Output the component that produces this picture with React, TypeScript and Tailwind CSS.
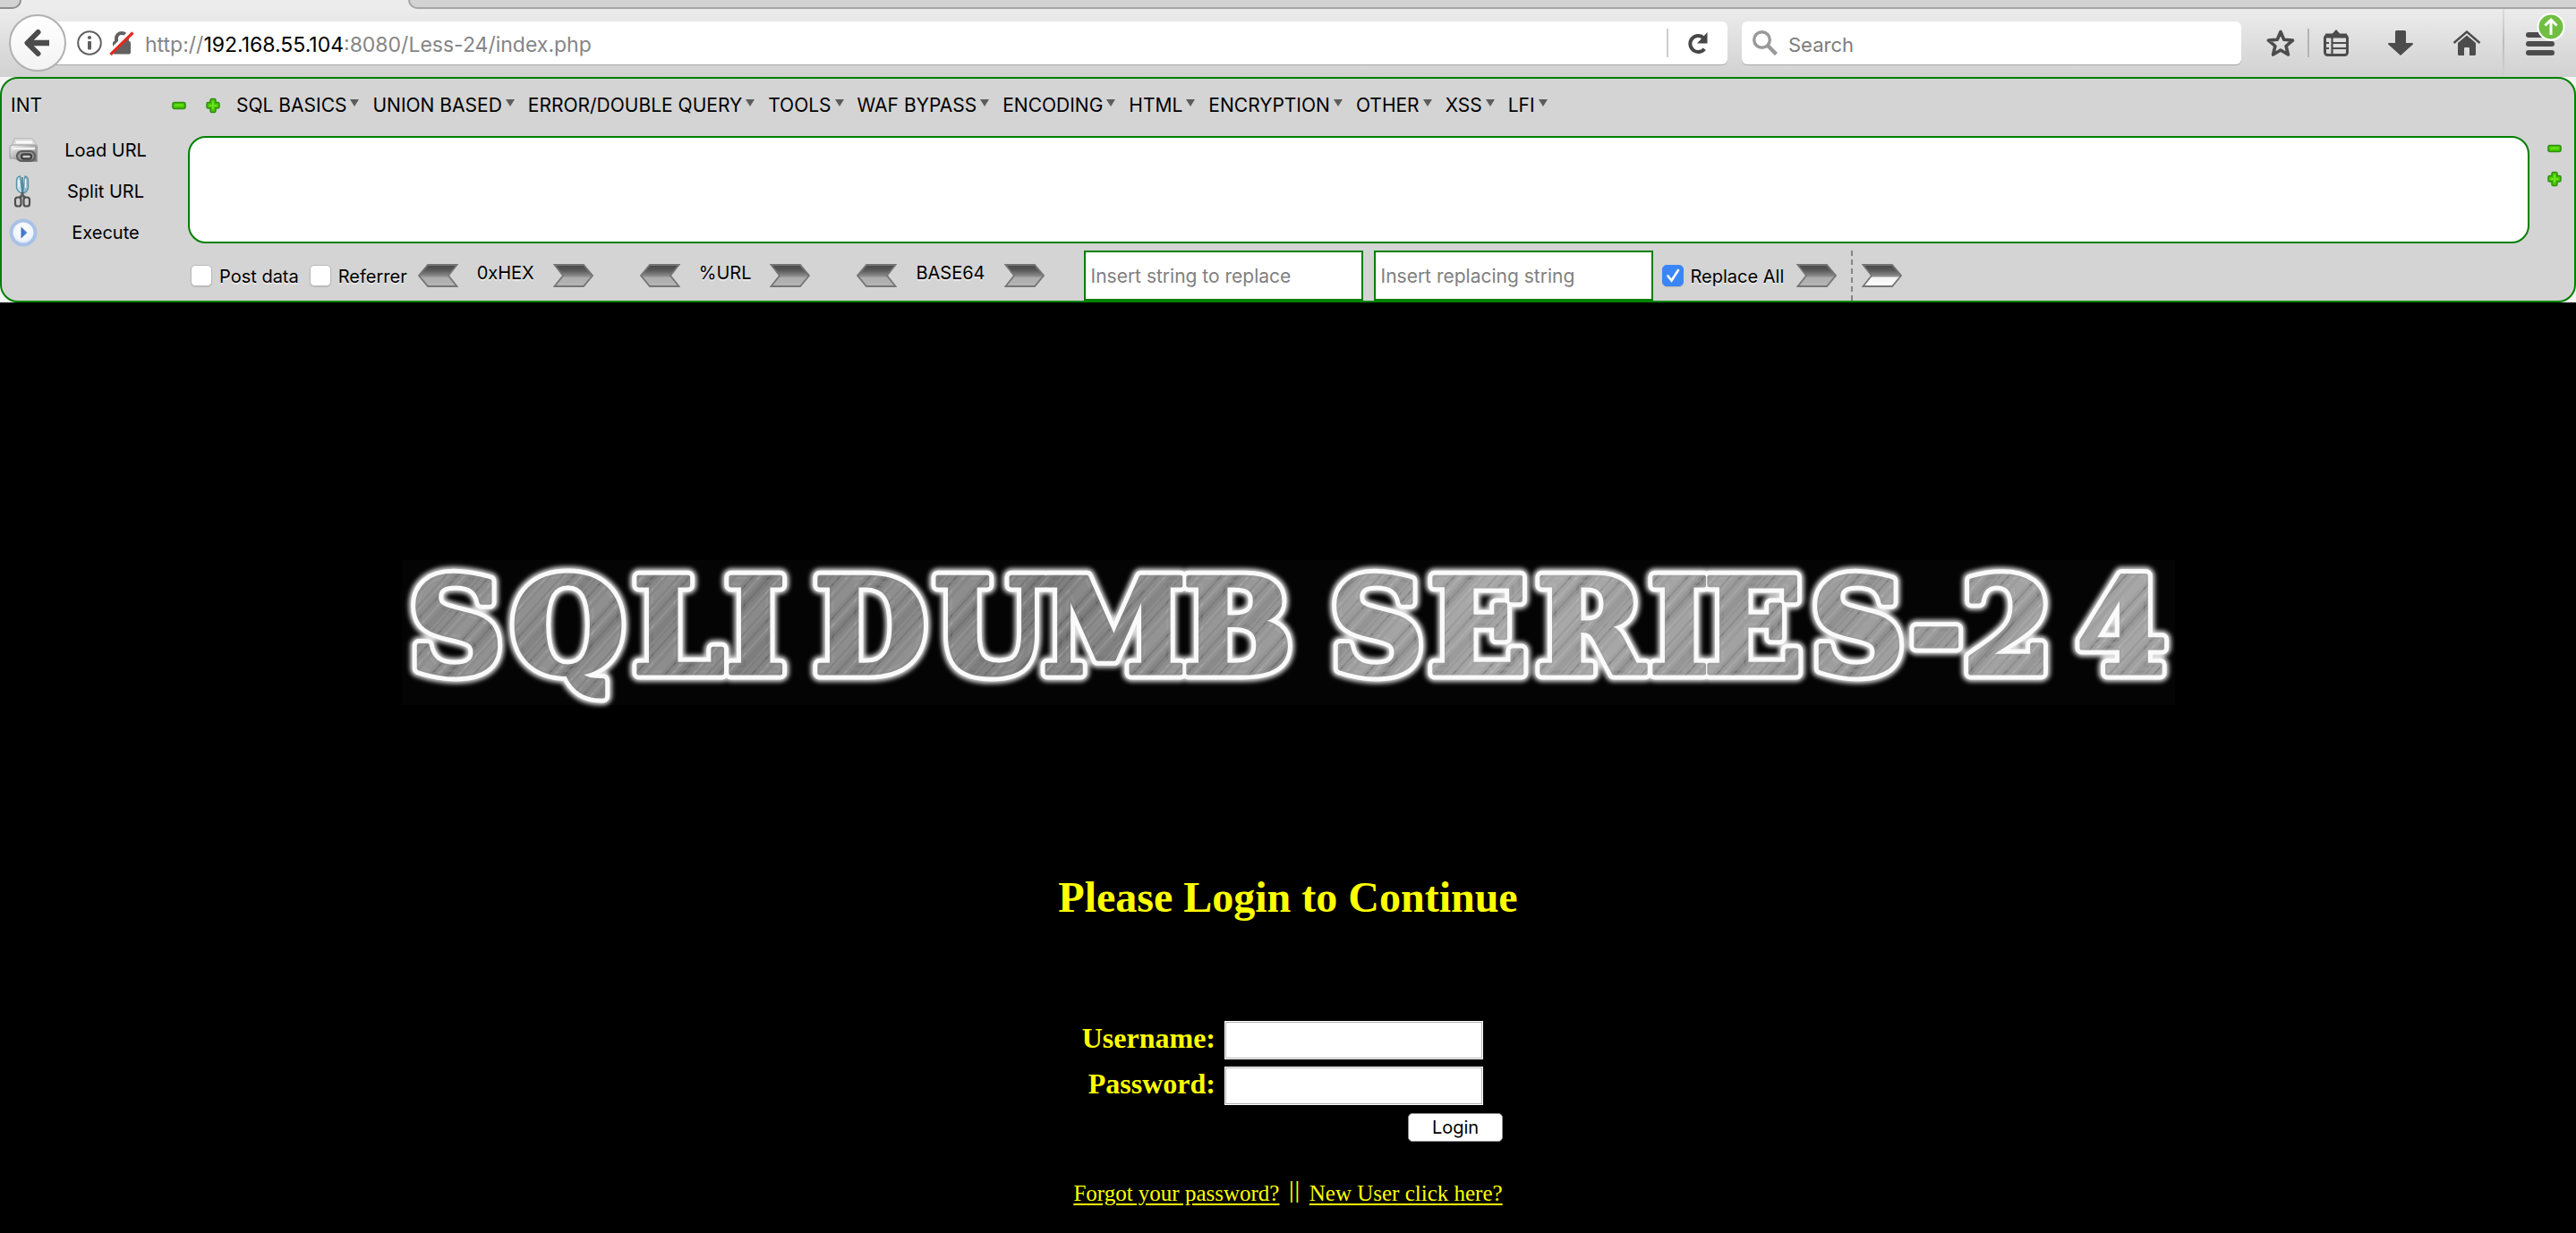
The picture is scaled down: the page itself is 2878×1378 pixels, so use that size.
import type { ReactNode } from "react";

const MENUS = [
  "SQL BASICS",
  "UNION BASED",
  "ERROR/DOUBLE QUERY",
  "TOOLS",
  "WAF BYPASS",
  "ENCODING",
  "HTML",
  "ENCRYPTION",
  "OTHER",
  "XSS",
  "LFI",
];

/* ---------- icons ---------- */

function GreenMinus() {
  return (
    <svg className="h-[18px] w-4" viewBox="0 0 16 18" aria-hidden="true">
      <rect x="1" y="5.5" width="14" height="7" rx="2" fill="#46c800" stroke="#2f8f10" strokeWidth="1.6" />
      <rect x="3" y="7.5" width="10" height="2" rx="1" fill="#6be31e" />
    </svg>
  );
}

function GreenPlus() {
  return (
    <svg className="h-[18px] w-4" viewBox="0 0 16 18" aria-hidden="true">
      <path
        d="M6.5 1.5h3a1.5 1.5 0 0 1 1.5 1.5v2.5h2.5A1.5 1.5 0 0 1 15 7v3.500a1.500 1.500 0 0 1-1.500 1.500H11V15a1.500 1.500 0 0 1-1.500 1.500h-3A1.500 1.500 0 0 1 5 15v-3H2.500A1.500 1.500 0 0 1 1 10.500V7a1.500 1.500 0 0 1 1.500-1.500H5V3A1.500 1.500 0 0 1 6.500 1.500z"
        fill="#46c800"
        stroke="#2f8f10"
        strokeWidth="1.5"
      />
      <path d="M3.500 9h9M8 4v9" stroke="#6be31e" strokeWidth="2" />
    </svg>
  );
}

function Chevron({ dir, light = false }: { dir: "left" | "right"; light?: boolean }) {
  const id = light ? "chev-light" : `chev-${dir}`;
  return (
    <svg className={dir === "left" ? "h-[26px] w-[45px] -scale-x-100" : "h-[26px] w-[45px]"} viewBox="0 0 45 26" aria-hidden="true">
      <defs>
        <linearGradient id={id} x1="0" x2="0" y1="0" y2="1">
          <stop offset="0" stopColor="#484848" />
          <stop offset="0.25" stopColor="#585858" />
          <stop offset="0.52" stopColor="#8c8c8c" />
          <stop offset="0.6" stopColor={light ? "#f4f4f4" : "#acacac"} />
          <stop offset="1" stopColor={light ? "#ffffff" : "#b6b6b6"} />
        </linearGradient>
      </defs>
      <path d="M1.500 1H34l10 12-10 12H1.500l9.500-12z" fill={`url(#${id})`} stroke="#757575" strokeWidth="1.800" />
    </svg>
  );
}

function LoadIcon() {
  return (
    <svg className="h-7 w-8" viewBox="0 0 32 28" aria-hidden="true">
      <defs>
        <linearGradient id="load-body" x1="0" x2="1" y1="0" y2="1">
          <stop offset="0" stopColor="#f4f4f4" />
          <stop offset="0.6" stopColor="#a2a2a2" />
          <stop offset="1" stopColor="#6e6e6e" />
        </linearGradient>
      </defs>
      <path d="M6 .800h20l5 7v3H3z" fill="#dedede" stroke="#b4b4b4" />
      <path d="M8 5h18" stroke="#fafafa" strokeWidth="3" />
      <path d="M1 9.500 4 8h26l1.500 2v16.500H14L6 23H1z" fill="url(#load-body)" stroke="#9a9a9a" />
      <path d="M4 12h25" stroke="#f2f2f2" strokeWidth="2.500" />
      <rect x="9" y="15" width="20" height="11" rx="5.500" fill="#9b9b9b" stroke="#5f5f5f" strokeWidth="2.200" />
      <rect x="14" y="18.500" width="11" height="5" rx="2.500" fill="#c9c9c9" stroke="#414141" strokeWidth="2.400" />
    </svg>
  );
}

function ScissorsIcon() {
  return (
    <svg className="h-9 w-8" viewBox="0 0 32 36" aria-hidden="true">
      <path d="M12.500 1c-2.500 0-4 2-4 6v6c0 3 2 5 4.500 6.500h2z" fill="#c4dde6" stroke="#5a93a9" strokeWidth="1.400" />
      <path d="M18 1c2.500 0 3.500 2 3.500 6v6c0 3-1.500 5-4 6.500h-2z" fill="#93bccb" stroke="#5a93a9" strokeWidth="1.400" />
      <path d="M11 5v8M18.500 4v10" stroke="#edf7fb" strokeWidth="1.500" />
      <path d="M15 2v17" stroke="#44798e" strokeWidth="1.600" />
      <path d="M15 19v5M15 22l-4 4M15 22l4 4" stroke="#5c5c5c" strokeWidth="3" />
      <rect x="7" y="24.500" width="6.500" height="10" rx="2.800" fill="#d0d0d0" stroke="#4f4f4f" strokeWidth="2.200" />
      <rect x="16.500" y="24.500" width="6.500" height="10" rx="2.800" fill="#d0d0d0" stroke="#4f4f4f" strokeWidth="2.200" />
    </svg>
  );
}

function ExecuteIcon() {
  return (
    <svg className="h-8 w-8" viewBox="0 0 32 32" aria-hidden="true">
      <defs>
        <radialGradient id="exec" cx="0.5" cy="0.4" r="0.6">
          <stop offset="0" stopColor="#ffffff" />
          <stop offset="0.7" stopColor="#eef4fc" />
          <stop offset="1" stopColor="#c4d8f3" />
        </radialGradient>
        <linearGradient id="exec-tri" x1="0" x2="1" y1="0" y2="0">
          <stop offset="0" stopColor="#3a6cbc" />
          <stop offset="1" stopColor="#5d92dd" />
        </linearGradient>
      </defs>
      <circle cx="16" cy="16" r="13.500" fill="url(#exec)" stroke="#a9c1e6" strokeWidth="4" />
      <path d="M13.500 9.500 20.500 16l-7 6.500z" fill="url(#exec-tri)" />
    </svg>
  );
}

function BackIcon() {
  return (
    <svg className="h-8 w-8" viewBox="0 0 32 32" aria-hidden="true">
      <path d="M5.500 16H29" stroke="#4c4c4c" strokeWidth="6.500" />
      <path d="M16.500 4 4.500 16l12 12" fill="none" stroke="#4c4c4c" strokeWidth="6" strokeLinecap="round" strokeLinejoin="round" />
    </svg>
  );
}

function InfoIcon() {
  return (
    <svg className="size-7" viewBox="0 0 28 28" aria-hidden="true">
      <circle cx="14" cy="14" r="12.800" fill="none" stroke="#5f5f5f" strokeWidth="2" />
      <circle cx="14" cy="8" r="2.100" fill="#5f5f5f" />
      <rect x="12" y="12" width="4" height="9.500" rx="1" fill="#5f5f5f" />
    </svg>
  );
}

function InsecureLockIcon() {
  return (
    <svg className="h-7 w-7" viewBox="0 0 28 28" aria-hidden="true">
      <path d="M8 14V9a6 6 0 0 1 12 0v5" fill="none" stroke="#616161" strokeWidth="4" />
      <rect x="4" y="12" width="20" height="14.500" rx="2" fill="#616161" />
      <path d="M.500 24 25 0" stroke="#fff" strokeWidth="4" />
      <path d="M1.500 27 26.500 2.500" stroke="#e02b20" strokeWidth="3.200" />
    </svg>
  );
}

function ReloadIcon() {
  return (
    <svg className="h-[26px] w-6" viewBox="0 0 24 26" aria-hidden="true">
      <path d="M19.300 19.700A9 9 0 1 1 18 7" fill="none" stroke="#474747" strokeWidth="4" />
      <path d="M22.500 1v12.500H11z" fill="#474747" />
    </svg>
  );
}

function SearchIcon() {
  return (
    <svg className="size-7" viewBox="0 0 28 28" aria-hidden="true">
      <circle cx="10.500" cy="10.500" r="8.800" fill="none" stroke="#999" strokeWidth="3.400" />
      <path d="m17 17 9.500 9.500" stroke="#999" strokeWidth="4.400" />
    </svg>
  );
}

function StarIcon() {
  return (
    <svg className="size-8" viewBox="0 0 32 32" aria-hidden="true">
      <path
        d="m16 3.500 3.700 8.700 9.800.900-7.400 6.400 2.300 9.500L16 24l-8.400 5 2.300-9.500-7.400-6.400 9.800-.900z"
        fill="none"
        stroke="#4c4c4c"
        strokeWidth="3.600"
        strokeLinejoin="round"
      />
    </svg>
  );
}

function ListIcon() {
  return (
    <svg className="h-[30px] w-7" viewBox="0 0 28 30" aria-hidden="true">
      <path d="M14 0 19 5.500H9z" fill="#4c4c4c" />
      <rect x="1.500" y="6.500" width="25" height="22" rx="3" fill="none" stroke="#4c4c4c" strokeWidth="3" />
      <path d="M2 7h24" stroke="#4c4c4c" strokeWidth="5" />
      <path d="M9.500 7v21M9.500 15H26M9.500 21H26M2 15h4M2 21h4" stroke="#4c4c4c" strokeWidth="2.200" />
    </svg>
  );
}

function DownloadIcon() {
  return (
    <svg className="h-7 w-7" viewBox="0 0 28 28" aria-hidden="true">
      <path d="M9.500 0h9a1.500 1.500 0 0 1 1.500 1.500V14h6.800c1.200 0 1.500 1 .800 1.800L14 28 .400 15.800C-.300 15 0 14 1.200 14H8V1.500A1.500 1.500 0 0 1 9.500 0z" fill="#4c4c4c" />
    </svg>
  );
}

function HomeIcon() {
  return (
    <svg className="h-7 w-8" viewBox="0 0 32 28" aria-hidden="true">
      <path d="M1.500 14 16 1.500 30.500 14" fill="none" stroke="#4c4c4c" strokeWidth="2.400" />
      <path d="M16 5.500 26 14v12.500a1.500 1.500 0 0 1-1.500 1.500H19v-8a1 1 0 0 0-1-1h-4a1 1 0 0 0-1 1v8H7.500A1.500 1.500 0 0 1 6 26.500V14z" fill="#4c4c4c" />
    </svg>
  );
}

/* ---------- small controls ---------- */

function IconButton({ label, children, className = "" }: { label: string; children: ReactNode; className?: string }) {
  return (
    <button type="button" aria-label={label} className={`flex shrink-0 items-center justify-center ${className}`}>
      {children}
    </button>
  );
}

function Tick({ label, checked = false }: { label: string; checked?: boolean }) {
  return (
    <label className="flex items-center gap-2 text-[20px]">
      <span className="relative block size-6">
        <input
          type="checkbox"
          defaultChecked={checked}
          className="peer block size-6 appearance-none rounded-[5px] border border-[#b9b9b9] bg-white shadow-[0_1px_1px_rgba(0,0,0,0.12)] checked:border-[#3b86f7] checked:bg-[#3b86f7]"
        />
        <svg className="pointer-events-none absolute inset-0 hidden size-6 peer-checked:block" viewBox="0 0 24 24" aria-hidden="true">
          <path d="m6.500 12.500 4 5L18 6" fill="none" stroke="#fff" strokeWidth="2.600" strokeLinecap="round" />
        </svg>
      </span>
      <span className="pt-0.5">{label}</span>
    </label>
  );
}

function Converter({ name }: { name: string }) {
  return (
    <div className="flex items-center">
      <IconButton label={`Decode ${name}`}>
        <Chevron dir="left" />
      </IconButton>
      <span className="px-[21px] pb-1.5 text-[20px]">{name}</span>
      <IconButton label={`Encode ${name}`}>
        <Chevron dir="right" />
      </IconButton>
    </div>
  );
}

function SideAction({ label, children }: { label: string; children: ReactNode }) {
  return (
    <button type="button" className="flex h-8 items-center pl-2 text-[20px]">
      <span className="flex w-8 justify-start">{children}</span>
      <span className="ml-7 w-24 text-center">{label}</span>
    </button>
  );
}

/* ---------- page regions ---------- */

function TabStrip() {
  return (
    <div className="flex h-2.5 bg-[#ececec]">
      <div className="w-6 rounded-br-[16px] border-r-2 border-b-2 border-[#8f8f8f] bg-[#d3d3d3]" />
      <div className="w-[432px]" />
      <div className="flex-1 rounded-bl-[16px] border-b-2 border-l-2 border-[#a6a6a6] bg-[#d3d3d3]" />
    </div>
  );
}

function NavBar() {
  return (
    <div className="flex h-[76px] items-center bg-linear-to-b from-[#ececec] to-[#d1d1d1] pl-2.5">
      <IconButton label="Back" className="relative z-10 size-16 rounded-full border-2 border-[#b1b1b1] bg-linear-to-b from-white to-[#f3f3f3]">
        <BackIcon />
      </IconButton>
      <div className="-ml-4 flex h-12 flex-1 items-center rounded-r-md bg-white pl-7 shadow-[0_1px_0_#a8a8a8]">
        <InfoIcon />
        <span className="ml-2">
          <InsecureLockIcon />
        </span>
        <div
          role="textbox"
          aria-label="Address"
          contentEditable
          suppressContentEditableWarning
          className="ml-3 flex-1 pt-1 text-[23px] whitespace-nowrap text-[#858585] outline-none"
        >
          http://<span className="text-black">192.168.55.104</span>:8080/Less-24/index.php
        </div>
        <div className="h-8 w-0.5 bg-[#cfcfcf]" />
        <IconButton label="Reload" className="w-[66px]">
          <ReloadIcon />
        </IconButton>
      </div>
      <label className="ml-4 flex h-12 w-[558px] items-center rounded-md bg-white pl-3 shadow-[0_1px_0_#a8a8a8]">
        <SearchIcon />
        <input
          type="search"
          aria-label="Search"
          placeholder="Search"
          className="ml-3 min-w-0 flex-1 bg-transparent pt-1 text-[22px] outline-none placeholder:text-[#7d7d7d]"
        />
      </label>
      <div className="ml-7 flex h-full items-center">
        <IconButton label="Bookmark this page">
          <StarIcon />
        </IconButton>
        <div className="mr-4 ml-3.5 h-8 w-0.5 bg-[#b4b4b4]" />
        <div className="flex items-center gap-11">
          <IconButton label="Show bookmarks">
            <ListIcon />
          </IconButton>
          <IconButton label="Downloads">
            <DownloadIcon />
          </IconButton>
          <IconButton label="Home">
            <HomeIcon />
          </IconButton>
        </div>
        <div className="mx-6 h-full w-0.5 bg-linear-to-b from-[#dedede] via-[#bdbdbd] to-[#d1d1d1]" />
        <button type="button" aria-label="Open menu" className="relative mr-6 flex w-8 flex-col gap-1 pt-0.5">
          <span className="h-1.5 rounded-full bg-[#4c4c4c]" />
          <span className="h-1.5 rounded-full bg-[#4c4c4c]" />
          <span className="h-1.5 rounded-full bg-[#4c4c4c]" />
          <svg className="absolute -top-5 left-3 size-8" viewBox="0 0 32 32" aria-hidden="true">
            <circle cx="16" cy="16" r="14.500" fill="#70bf41" stroke="#fff" strokeWidth="2" />
            <path d="M16 25V9M9.500 14.500 16 8l6.500 6.500" fill="none" stroke="#fff" strokeWidth="3" />
          </svg>
        </button>
      </div>
    </div>
  );
}

const REPLACE_FIELD =
  "h-14 w-[312px] border-2 border-[#008000] bg-white px-1.5 text-[21px] outline-none placeholder:text-[#808080]";

function HackBar() {
  return (
    <section aria-label="HackBar" className="bg-[#f4f4f4]">
      <div className="rounded-[20px] border-2 border-[#008000] bg-[#d4d4d4] text-black [text-shadow:0_2px_1px_rgba(255,255,255,0.5)]">
        <div className="mb-1 flex h-[60px] items-center text-[21px]">
          <span className="w-[190px] pl-2.5">INT</span>
          <IconButton label="Remove menu row">
            <GreenMinus />
          </IconButton>
          <IconButton label="Add menu row" className="ml-[22px]">
            <GreenPlus />
          </IconButton>
          <nav className="ml-[18px] flex gap-[15px]">
            {MENUS.map((menu) => (
              <button key={menu} type="button" className="flex items-center gap-1 whitespace-nowrap">
                {menu}
                <svg className="mb-1.5 h-2 w-2.5" viewBox="0 0 10 8" aria-hidden="true">
                  <path d="M0 0h10L5 8z" fill="#5c5c5c" />
                </svg>
              </button>
            ))}
          </nav>
        </div>
        <div className="flex">
          <div className="flex w-[208px] flex-col gap-3.5">
            <SideAction label="Load URL">
              <LoadIcon />
            </SideAction>
            <SideAction label="Split URL">
              <ScissorsIcon />
            </SideAction>
            <SideAction label="Execute">
              <ExecuteIcon />
            </SideAction>
          </div>
          <div className="min-w-0 flex-1">
            <textarea
              aria-label="Request URL"
              className="block h-[120px] w-full resize-none rounded-[20px] border-2 border-[#008000] bg-white px-4 py-2 text-[21px] outline-none"
            />
            <div className="flex h-16 items-center pt-2 pl-[3px]">
              <Tick label="Post data" />
              <div className="ml-3">
                <Tick label="Referrer" />
              </div>
              <div className="ml-3 flex gap-[52px]">
                <Converter name="0xHEX" />
                <Converter name="%URL" />
                <Converter name="BASE64" />
              </div>
              <input
                aria-label="String to replace"
                placeholder="Insert string to replace"
                className={`ml-11 ${REPLACE_FIELD}`}
              />
              <input
                aria-label="Replacing string"
                placeholder="Insert replacing string"
                className={`mr-2.5 ml-3 ${REPLACE_FIELD}`}
              />
              <Tick label="Replace All" checked />
              <IconButton label="Replace" className="ml-3.5">
                <Chevron dir="right" />
              </IconButton>
              <div className="mr-2.5 ml-4 h-14 border-l-2 border-dashed border-[#858585]" />
              <IconButton label="Clear">
                <Chevron dir="right" light />
              </IconButton>
            </div>
          </div>
          <div className="flex w-[50px] flex-col items-center gap-4 pt-[5px] pl-1.5">
            <IconButton label="Shrink">
              <GreenMinus />
            </IconButton>
            <IconButton label="Grow">
              <GreenPlus />
            </IconButton>
          </div>
        </div>
      </div>
    </section>
  );
}

/* x of each character of the banner, spaces included */
const LOGO_X = [8, 122, 258, 361, 430, 460, 594, 715, 872, 1000, 1037, 1147, 1267, 1393, 1454, 1574, 1684, 1743, 1871];

function Logo() {
  return (
    <svg
      className="h-auto w-full max-w-[1981px] overflow-visible bg-[#040404] font-[DejaVu_Serif,serif] text-[146px] font-bold"
      viewBox="0 0 1981 162"
      role="img"
      aria-label="SQLI DUMB SERIES-24"
    >
      <defs>
        <linearGradient id="metal" gradientUnits="userSpaceOnUse" x1="0" y1="0" x2="1981" y2="160">
          <stop offset="0" stopColor="#8e8e8e" />
          <stop offset="0.2" stopColor="#848484" />
          <stop offset="0.3" stopColor="#8a8a8a" />
          <stop offset="0.36" stopColor="#7c7c7c" />
          <stop offset="0.42" stopColor="#8c8c8c" />
          <stop offset="0.62" stopColor="#a6a6a6" />
          <stop offset="0.8" stopColor="#989898" />
          <stop offset="1" stopColor="#a2a2a2" />
        </linearGradient>
        <pattern id="brushed" patternUnits="userSpaceOnUse" width="97" height="400" patternTransform="rotate(42)">
          <rect x="0" width="9" height="400" fill="#fff" opacity="0.06" />
          <rect x="12" width="2" height="400" fill="#000" opacity="0.1" />
          <rect x="17" width="3" height="400" fill="#fff" opacity="0.09" />
          <rect x="23" width="8" height="400" fill="#000" opacity="0.06" />
          <rect x="26" width="2" height="400" fill="#000" opacity="0.08" />
          <rect x="35" width="2" height="400" fill="#fff" opacity="0.1" />
          <rect x="40" width="12" height="400" fill="#fff" opacity="0.05" />
          <rect x="47" width="2" height="400" fill="#000" opacity="0.08" />
          <rect x="56" width="3" height="400" fill="#000" opacity="0.08" />
          <rect x="63" width="2" height="400" fill="#fff" opacity="0.09" />
          <rect x="68" width="11" height="400" fill="#000" opacity="0.05" />
          <rect x="75" width="2" height="400" fill="#fff" opacity="0.07" />
          <rect x="84" width="2" height="400" fill="#000" opacity="0.1" />
          <rect x="90" width="3" height="400" fill="#fff" opacity="0.08" />
        </pattern>
        <filter id="glow" x="-2%" y="-20%" width="104%" height="140%">
          <feGaussianBlur stdDeviation="2.500" />
        </filter>
        <text id="logo-text" x={LOGO_X.join(" ")} y="126" strokeLinejoin="round">
          SQLI DUMB SERIES-24
        </text>
      </defs>
      <use href="#logo-text" fill="#dcdcdc" stroke="#dcdcdc" strokeWidth="20" filter="url(#glow)" />
      <use href="#logo-text" fill="#fafafa" stroke="#fafafa" strokeWidth="15" />
      <use href="#logo-text" fill="url(#metal)" stroke="url(#metal)" strokeWidth="5" />
      <use href="#logo-text" fill="url(#brushed)" stroke="url(#brushed)" strokeWidth="5" />
    </svg>
  );
}

const FIELD =
  "h-[43px] w-[289px] border border-white bg-white px-2 text-[22px] text-black shadow-[inset_0_0_0_1px_#b5b5b5] outline-none";

function LoginPage() {
  return (
    <main className="flex flex-1 flex-col items-center bg-black pt-72 pb-8 font-[Liberation_Serif,serif] text-[#ffff00]">
      <Logo />
      <h1 className="mt-[187px] text-[48px] leading-14 font-bold">Please Login to Continue</h1>
      <form className="mt-[110px] grid grid-cols-[159px_311px] gap-x-2.5 gap-y-2" onSubmit={(e) => e.preventDefault()}>
        <label htmlFor="username" className="self-center justify-self-end pb-1.5 text-[32px] leading-9 font-bold">
          Username:
        </label>
        <input id="username" type="text" className={FIELD} />
        <label htmlFor="password" className="self-center justify-self-end pb-1.5 text-[32px] leading-9 font-bold">
          Password:
        </label>
        <input id="password" type="password" className={FIELD} />
        <button
          type="submit"
          className="col-start-2 mt-px h-8 w-[106px] justify-self-end rounded-[5px] border border-[#8c8c8c] bg-white font-[Inter,sans-serif] text-[20px] leading-none text-black"
        >
          Login
        </button>
      </form>
      <p className="mt-10 flex items-center gap-2.5 text-[25px] leading-8">
        <a href="#forgot" className="underline underline-offset-3">
          Forgot your password?
        </a>
        <span className="pb-1 font-[Inter,sans-serif] text-[20px]">||</span>
        <a href="#new-user" className="underline underline-offset-3">
          New User click here?
        </a>
      </p>
    </main>
  );
}

export default function App() {
  return (
    <div className="flex min-h-screen flex-col bg-black font-[Inter,sans-serif]">
      <TabStrip />
      <NavBar />
      <HackBar />
      <LoginPage />
    </div>
  );
}
